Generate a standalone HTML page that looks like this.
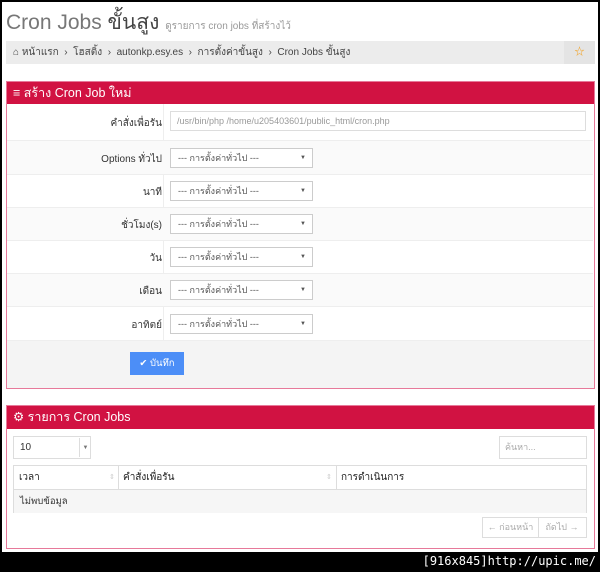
<!DOCTYPE html>
<html><head><meta charset="utf-8"><style>
*{box-sizing:border-box;margin:0;padding:0}
body{width:600px;height:572px;background:#000;position:relative;overflow:hidden;font-family:"Liberation Sans","Noto Sans CJK SC",sans-serif;font-size:10px;color:#333}
.a{position:absolute}
#pg{left:2px;top:2px;width:596px;height:550px;background:#fff}
.hdr{background:#d11242;color:#fff;font-size:12.5px;line-height:22px;padding-left:6px}
.row{position:absolute;left:7px;width:586px;border-top:1px solid #eee}
.lbl{position:absolute;right:431px;top:0;font-size:10px;color:#333}
.sel{position:absolute;left:163px;width:143px;height:20px;border:1px solid #ccc;background:#fff;font-size:9px;color:#555;line-height:18px;padding-left:7px}
.sel:after{content:"▼";position:absolute;right:6px;top:0;font-size:6px;color:#555}
.sel.inp:after{content:none}
</style></head><body>
<div class="a" id="pg"></div>
<div class="a" style="left:6px;top:6px;font-size:21px;color:#777;font-weight:300">Cron Jobs <b style="color:#444">ขั้นสูง</b> <span style="font-size:10px;color:#999">ดูรายการ cron jobs ที่สร้างไว้</span></div>
<div class="a" style="left:6px;top:41px;width:558px;height:23px;background:#ececec;font-size:10px;line-height:23px;padding-left:7px;color:#444">⌂ หน้าแรก &nbsp;›&nbsp; โฮสติ้ง &nbsp;›&nbsp; autonkp.esy.es &nbsp;›&nbsp; การตั้งค่าขั้นสูง &nbsp;›&nbsp; Cron Jobs ขั้นสูง</div>
<div class="a" style="left:564px;top:41px;width:31px;height:23px;background:#e4e4e4;color:#f39c12;font-size:10px;text-align:center;line-height:23px">☆</div>

<div class="a" style="left:6px;top:81px;width:589px;height:308px;border:1px solid #e7799a;background:#fff">
<div class="hdr">≡ สร้าง Cron Job ใหม่</div>
</div>
<div class="a" style="left:163px;top:104px;width:1px;height:236px;background:#eee"></div>
<div class="row" style="top:106px;height:34px;border-top:none"><span class="lbl" style="top:10px">คำสั่งเพื่อรัน</span><div class="sel inp" style="width:416px;top:5px;color:#999;padding-left:6px;border-color:#ddd">/usr/bin/php /home/u205403601/public_html/cron.php</div></div>
<div class="row" style="top:140px;height:34px;background:#fafafa"><span class="lbl" style="top:11px">Options ทั่วไป</span><div class="sel" style="top:7px">--- การตั้งค่าทั่วไป ---</div></div>
<div class="row" style="top:174px;height:33px"><span class="lbl" style="top:10px">นาที</span><div class="sel" style="top:6px">--- การตั้งค่าทั่วไป ---</div></div>
<div class="row" style="top:207px;height:33px;background:#fafafa"><span class="lbl" style="top:10px">ชั่วโมง(s)</span><div class="sel" style="top:6px">--- การตั้งค่าทั่วไป ---</div></div>
<div class="row" style="top:240px;height:33px"><span class="lbl" style="top:10px">วัน</span><div class="sel" style="top:6px">--- การตั้งค่าทั่วไป ---</div></div>
<div class="row" style="top:273px;height:33px;background:#fafafa"><span class="lbl" style="top:10px">เดือน</span><div class="sel" style="top:6px">--- การตั้งค่าทั่วไป ---</div></div>
<div class="row" style="top:306px;height:34px"><span class="lbl" style="top:11px">อาทิตย์</span><div class="sel" style="top:7px">--- การตั้งค่าทั่วไป ---</div></div>
<div class="row" style="top:340px;height:48px;background:#f4f4f4;left:7px;width:587px"></div>
<div class="a" style="left:130px;top:352px;width:54px;height:23px;background:#4c8ef7;color:#fff;font-size:9.5px;line-height:23px;text-align:center">✔ บันทึก</div>

<div class="a" style="left:6px;top:405px;width:589px;height:144px;border:1px solid #e7799a;background:#fff">
<div class="hdr" style="height:23px">⚙ รายการ Cron Jobs</div>
</div>
<div class="a" style="left:13px;top:436px;width:78px;height:23px;border:1px solid #ddd;font-size:10px;line-height:21px;padding-left:6px">10<span style="position:absolute;left:65px;top:1px;height:19px;border-left:1px solid #ddd;width:12px;font-size:6px;text-align:center;color:#777">▼</span></div>
<div class="a" style="left:499px;top:436px;width:88px;height:23px;border:1px solid #ddd;font-size:9px;line-height:21px;padding-left:5px;color:#aaa">ค้นหา...</div>
<div class="a" style="left:13px;top:465px;width:574px;height:48px;border:1px solid #ddd">
<div style="height:24px;border-bottom:1px solid #ddd;position:relative;font-size:10px;line-height:23px;color:#222">
<span class="a" style="left:5px">เวลา</span><span class="a" style="left:95px;color:#ccc;font-size:7px">⇕</span>
<span class="a" style="left:104px;top:0;height:23px;border-left:1px solid #ddd"></span>
<span class="a" style="left:109px">คำสั่งเพื่อรัน</span><span class="a" style="left:312px;color:#ccc;font-size:7px">⇕</span>
<span class="a" style="left:322px;top:0;height:23px;border-left:1px solid #ddd"></span>
<span class="a" style="left:327px">การดำเนินการ</span></div>
<div style="height:23px;background:#f6f6f6;font-size:9.5px;line-height:23px;padding-left:6px">ไม่พบข้อมูล</div>
</div>
<div class="a" style="left:482px;top:517px;width:105px;height:21px;border:1px solid #ddd;font-size:9px;line-height:19px;color:#aaa"><span style="display:inline-block;width:56px;text-align:center;border-right:1px solid #ddd">← ก่อนหน้า</span><span style="display:inline-block;width:46px;text-align:center">ถัดไป →</span></div>
<div class="a" style="right:4px;top:554px;color:#fff;font-family:'DejaVu Sans Mono',monospace;font-size:12px">[916x845]http://upic.me/</div>
</body></html>
